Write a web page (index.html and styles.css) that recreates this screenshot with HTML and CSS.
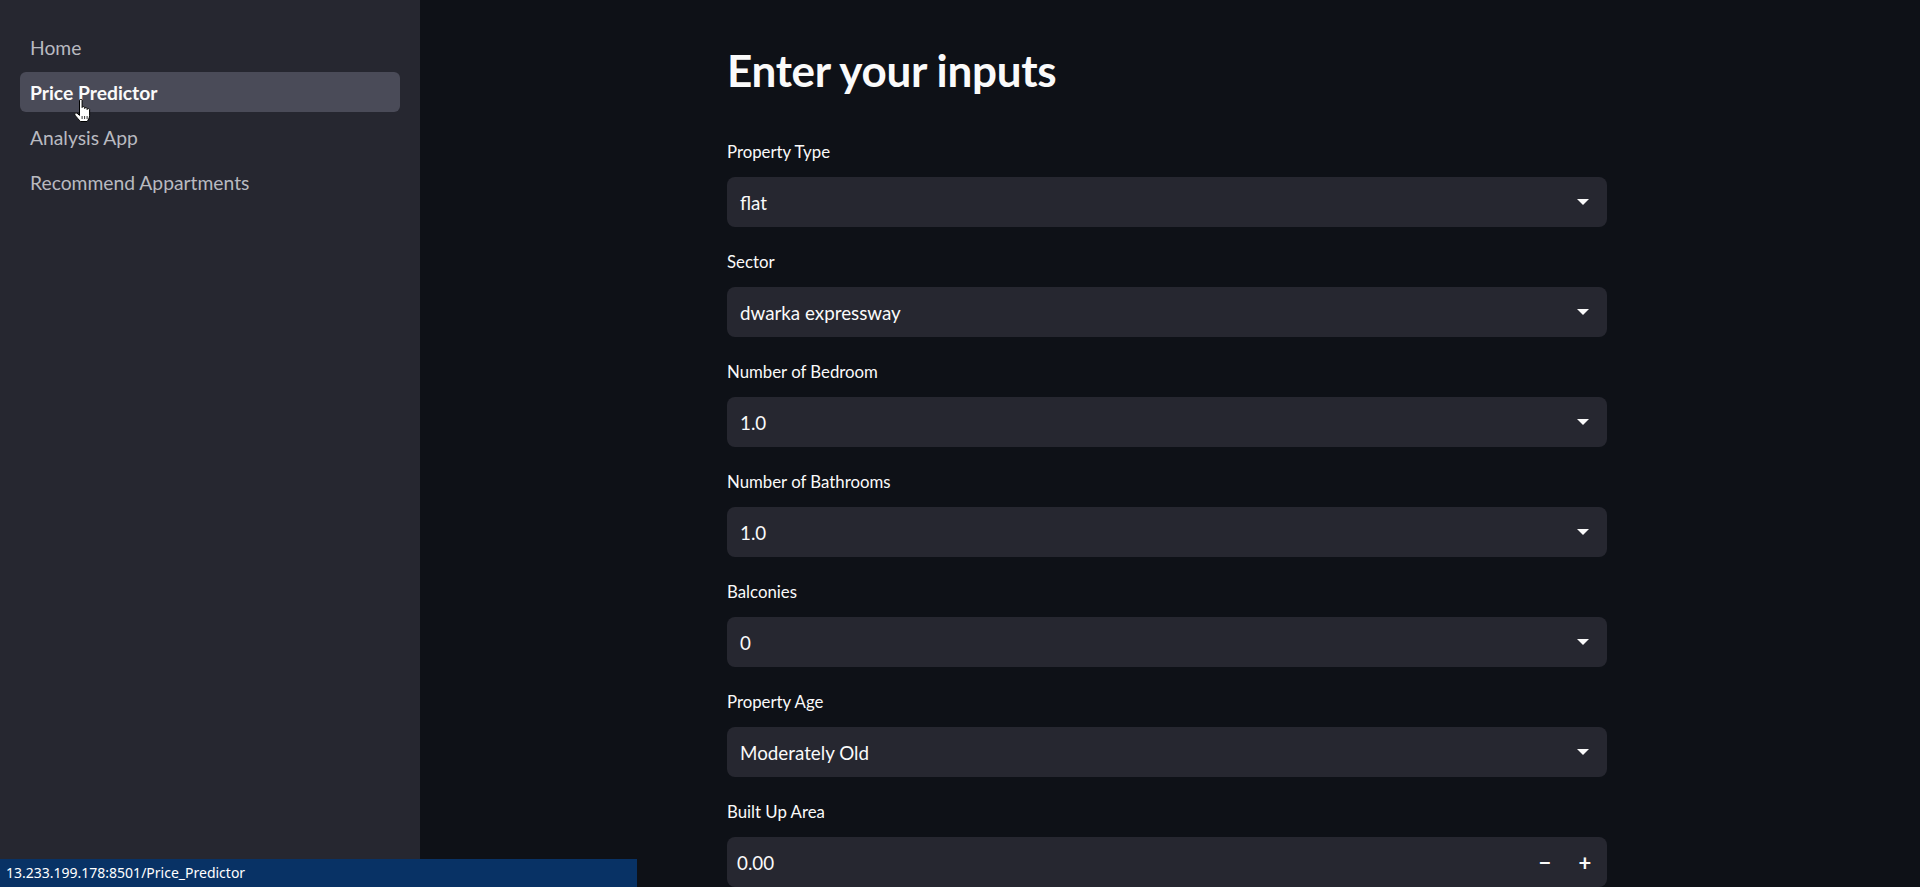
FILE: index.html
```html
<!DOCTYPE html>
<html lang="en">
<head>
<meta charset="utf-8">
<title>Price Predictor</title>
<link rel="stylesheet" href="styles.css">
</head>
<body>
<div class="app">
  <aside class="sidebar">
    <nav class="nav">
      <a class="nav-item">Home</a>
      <a class="nav-item active">Price Predictor</a>
      <a class="nav-item">Analysis App</a>
      <a class="nav-item">Recommend Appartments</a>
    </nav>
  </aside>
  <main class="main">
    <div class="content">
      <h1 class="title">Enter your inputs</h1>
      <div class="fields">
        <div class="field">
          <div class="label">Property Type</div>
          <div class="select"><span class="value">flat</span><span class="arrow"></span></div>
        </div>
        <div class="field">
          <div class="label">Sector</div>
          <div class="select"><span class="value">dwarka expressway</span><span class="arrow"></span></div>
        </div>
        <div class="field">
          <div class="label">Number of Bedroom</div>
          <div class="select"><span class="value">1.0</span><span class="arrow"></span></div>
        </div>
        <div class="field">
          <div class="label">Number of Bathrooms</div>
          <div class="select"><span class="value">1.0</span><span class="arrow"></span></div>
        </div>
        <div class="field">
          <div class="label">Balconies</div>
          <div class="select"><span class="value">0</span><span class="arrow"></span></div>
        </div>
        <div class="field">
          <div class="label">Property Age</div>
          <div class="select"><span class="value">Moderately Old</span><span class="arrow"></span></div>
        </div>
        <div class="field">
          <div class="label">Built Up Area</div>
          <div class="number"><span class="value num">0.00</span><span class="step">&#8722;</span><span class="step">+</span></div>
        </div>
      </div>
    </div>
  </main>
</div>
<div class="statusbar">13.233.199.178:8501/Price_Predictor</div>
<svg class="cursor" width="20" height="24" viewBox="0 0 20 24">
  <path d="M6.5 1.2c0-1.3 2.6-1.3 2.6 0v7.3c0-1.2 2.5-1.2 2.5 0v1c0-1.2 2.5-1.2 2.5 0v1c0-1.2 2.5-1.2 2.5 0v5.8c0 2.6-1.3 4.6-2.6 6.2H7.5C6.4 21.3 3.6 18.3 2 16.2c-1-1.5.6-3.1 2-2l2.5 2.2z" fill="#fff" stroke="#000" stroke-width="1" stroke-linejoin="round"/>
  <path d="M9.1 17v3M11.6 17v3M14.1 17v3" stroke="#000" stroke-width="0.8"/>
</svg>
</body>
</html>
```

FILE: styles.css
```css
* { box-sizing: border-box; }
html, body {
  margin: 0;
  padding: 0;
  height: 100%;
  overflow: hidden;
  background: #0e1117;
  font-family: Lato, "Noto Sans", sans-serif;
  color: #fafafa;
}
.app {
  display: flex;
  height: 887px;
}
.sidebar {
  width: 420px;
  flex: none;
  background: #262730;
  padding: 27px 20px 0;
}
.nav {
  display: flex;
  flex-direction: column;
  gap: 5px;
}
.nav-item {
  display: flex;
  align-items: center;
  height: 40px;
  padding-left: 10px;
  border-radius: 6px;
  font-size: 19.3px;
  color: #b9bac0;
}
.nav-item.active {
  background: #4a4b58;
  color: #fafafa;
  font-weight: 700;
}
.main {
  flex: 1;
  padding-right: 6px;
}
.content {
  width: 880px;
  margin: 0 auto;
  padding-top: 42px;
}
.title {
  margin: 0;
  font-size: 44px;
  line-height: 56px;
  font-weight: 700;
  letter-spacing: -0.3px;
}
.fields {
  margin-top: 41px;
  display: flex;
  flex-direction: column;
  gap: 22px;
}
.field {
  display: flex;
  flex-direction: column;
}
.label {
  height: 26px;
  line-height: 26px;
  margin-bottom: 12px;
  font-size: 16.8px;
}
.select, .number {
  height: 50px;
  background: #262730;
  border-radius: 8px;
  display: flex;
  align-items: center;
  padding: 0 18px 0 13px;
}
.value {
  flex: 1;
  font-size: 18.8px;
  color: #fafafa;
}
.arrow {
  width: 0;
  height: 0;
  border-left: 6px solid transparent;
  border-right: 6px solid transparent;
  border-top: 6px solid #fafafa;
}
.number {
  padding: 0 2px 0 10px;
}
.step {
  width: 40px;
  text-align: center;
  font-size: 22px;
  font-weight: 700;
  color: #fafafa;
}
.statusbar {
  position: absolute;
  left: 0;
  bottom: 0;
  width: 637px;
  height: 28px;
  background: #083265;
  color: #fff;
  font-family: "Noto Sans", sans-serif;
  font-size: 14px;
  line-height: 28px;
  padding-left: 6px;
}
.cursor {
  position: absolute;
  left: 73px;
  top: 99px;
}
```
